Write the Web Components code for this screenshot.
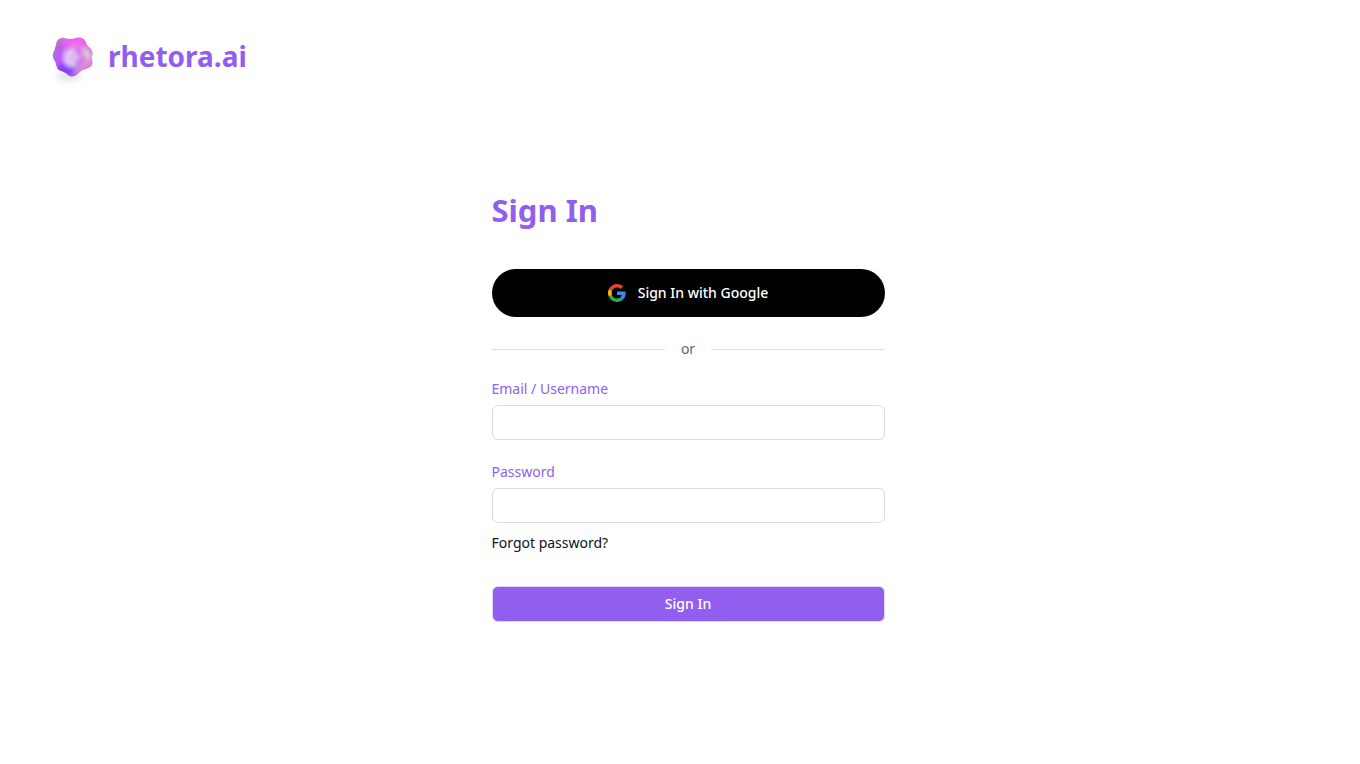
<!DOCTYPE html>
<html lang="en">
<head>
<meta charset="utf-8">
<meta name="viewport" content="width=device-width, initial-scale=1">
<title>Sign In – rhetora.ai</title>
<style>
  body { margin: 0; background: #fff; font: 14px/24px "Noto Sans", "Open Sans", sans-serif; --brand: #915eef; }
</style>
</head>
<body>
<sign-in-page></sign-in-page>

<script>
const define = (name, html, setup) => customElements.define(name, class extends HTMLElement {
  constructor() {
    super();
    const t = document.createElement('template');
    t.innerHTML = html;
    this.attachShadow({ mode: 'open' }).append(t.content.cloneNode(true));
  }
  connectedCallback() { if (setup) setup(this, this.shadowRoot); }
});

define('brand-mark', `
<style>
  :host { display: block; width: 48px; height: 56px; flex: none; }
  svg { display: block; }
</style>
<svg width="48" height="56" viewBox="0 0 48 56" aria-hidden="true">
  <defs>
    <linearGradient id="base" x1="0.75" y1="0" x2="0.35" y2="1">
      <stop offset="0" stop-color="#f05ae8"/><stop offset=".5" stop-color="#c87bf0"/><stop offset="1" stop-color="#9a48f5"/>
    </linearGradient>
    <filter id="soft" x="-50%" y="-50%" width="200%" height="200%"><feGaussianBlur stdDeviation="2"/></filter>
    <filter id="shade" x="-50%" y="-100%" width="200%" height="300%"><feGaussianBlur stdDeviation="3"/></filter>
    <clipPath id="blob"><path d="M12 6.500C15 4.500 19 7.500 23 7C27 6.500 30 4.500 34 6C38 7.500 37 11 40 14C42 16 45 18 44.500 22C44 25 43.500 26 44.500 30C45 34 41 36 37 37C33 38 32 40 29 42.500C26 45 22 45 20 43C17 40 16 40 12 38.500C8 37 9 33 7 29.500C5 26 4 24 5.500 20.500C7 17 7 17 8 13C8.500 10 9 8 12 6.500Z"/></clipPath>
  </defs>
  <ellipse cx="21" cy="44" rx="13" ry="5" fill="#777" opacity=".2" filter="url(#shade)"/>
  <g clip-path="url(#blob)">
    <rect width="48" height="48" fill="url(#base)"/>
    <g filter="url(#soft)">
      <path d="M4 16Q9 6 16 6L13 12Q8 20 6 29Z" fill="#aa72b8"/>
      <ellipse cx="28" cy="11" rx="12" ry="4" fill="#f35cef"/>
      <path d="M8 22Q9 12 18 13Q11 23 18 34L10 36Z" fill="#bd55fa"/>
      <ellipse cx="18" cy="37" rx="9" ry="6" fill="#8540fa"/>
      <path d="M23 12Q33 12 38 22" stroke="#e87be9" stroke-width="5" fill="none"/>
      <ellipse cx="39" cy="22" rx="4" ry="7" fill="#dcc4d6" transform="rotate(-28 39 22)"/>
      <ellipse cx="38" cy="32" rx="7" ry="4" fill="#f087d5" transform="rotate(-30 38 32)"/>
      <ellipse cx="32" cy="38" rx="7" ry="3" fill="#d391c9" transform="rotate(-35 32 38)"/>
      <path d="M27 19Q17 20 19 28Q21 34 28 31" stroke="#e7c9ef" stroke-width="6" fill="none"/>
      <ellipse cx="27" cy="25" rx="5" ry="4" fill="#e0b8f0"/>
    </g>
  </g>
</svg>`);

define('brand-header', `
<style>
  :host { display: block; padding: 32px 48px 0; }
  header { display: flex; }
  a { display: flex; align-items: flex-start; gap: 12px; color: var(--brand); text-decoration: none; font-size: 28px; line-height: 48px; font-weight: 700; }
</style>
<header><a href="#"><brand-mark></brand-mark><span><slot></slot></span></a></header>`);

define('google-button', `
<style>
  :host { display: block; }
  button { display: flex; align-items: center; justify-content: center; gap: 12px; width: 100%; height: 48px; border: 0; border-radius: 24px; background: #000; color: #fff; font: inherit; font-weight: 500; cursor: pointer; }
</style>
<button type="button">
  <svg width="18" height="18" viewBox="0 0 48 48" aria-hidden="true">
    <path fill="#EA4335" d="M24 9.500c3.540 0 6.710 1.220 9.210 3.600l6.850-6.850C35.900 2.380 30.470 0 24 0 14.620 0 6.510 5.380 2.560 13.220l7.980 6.190C12.430 13.720 17.740 9.500 24 9.500z"/>
    <path fill="#4285F4" d="M46.980 24.550c0-1.570-.15-3.090-.38-4.550H24v9.020h12.940c-.58 2.960-2.260 5.480-4.780 7.180l7.730 6c4.510-4.180 7.090-10.360 7.090-17.650z"/>
    <path fill="#FBBC05" d="M10.530 28.590c-.48-1.450-.76-2.990-.76-4.590s.27-3.140.76-4.590l-7.980-6.190C.92 16.460 0 20.120 0 24c0 3.880.92 7.540 2.560 10.780l7.970-6.190z"/>
    <path fill="#34A853" d="M24 48c6.480 0 11.930-2.130 15.890-5.810l-7.730-6c-2.150 1.450-4.920 2.300-8.160 2.300-6.260 0-11.570-4.220-13.470-9.910l-7.980 6.190C6.510 42.620 14.620 48 24 48z"/>
  </svg>
  <slot></slot>
</button>`);

define('or-divider', `
<style>
  :host { display: flex; align-items: center; gap: 16px; color: #666; }
  :host::before, :host::after { content: ""; flex: 1; height: 1px; background: #dedede; }
</style>
<slot></slot>`);

define('text-field', `
<style>
  :host { display: block; }
  label { display: block; margin-bottom: 4px; color: var(--brand); }
  input { display: block; box-sizing: border-box; width: 100%; height: 35px; padding: 0 12px; border: 1px solid #dcdcdc; border-radius: 6px; background: #fff; font: inherit; }
  input:focus { outline: 2px solid var(--brand); }
</style>
<label for="field"><slot></slot></label>
<input id="field">`, (host, root) => {
  const input = root.querySelector('input');
  input.type = host.getAttribute('type') || 'text';
  input.autocomplete = host.getAttribute('autocomplete') || 'off';
});

define('primary-button', `
<style>
  :host { display: block; }
  button { display: block; width: 100%; height: 36px; border: 1px solid #e2d7fa; border-radius: 6px; background: var(--brand); color: #fff; font: inherit; font-weight: 500; cursor: pointer; }
</style>
<button type="submit"><slot></slot></button>`);

define('sign-in-page', `
<style>
  :host { display: block; }
  main { display: flex; justify-content: center; padding: 98px 16px 64px 32px; }
  form { width: 100%; max-width: 393px; }
  h1 { margin: 0 0 35px; color: var(--brand); font-size: 31px; line-height: 48px; font-weight: 700; }
  or-divider { margin: 20px 0 16px; }
  text-field + text-field { margin-top: 20px; }
  a { display: table; margin: 8px 0 31px; color: #0b1423; text-decoration: none; }
</style>
<brand-header>rhetora.ai</brand-header>
<main>
  <form>
    <h1>Sign In</h1>
    <google-button>Sign In with Google</google-button>
    <or-divider>or</or-divider>
    <text-field autocomplete="username">Email / Username</text-field>
    <text-field type="password" autocomplete="current-password">Password</text-field>
    <a href="#">Forgot password?</a>
    <primary-button>Sign In</primary-button>
  </form>
</main>`);
</script>
</body>
</html>
